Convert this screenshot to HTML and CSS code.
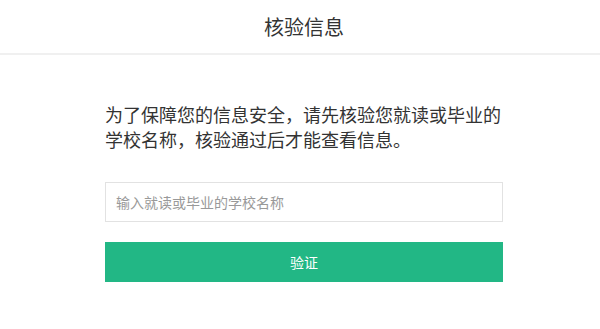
FILE: index.html
```html
<!DOCTYPE html>
<html lang="zh-CN">
<head>
  <meta charset="UTF-8">
  <meta name="viewport" content="width=device-width, initial-scale=1.0">
  <title>核验信息</title>
  <link rel="stylesheet" href="styles.css">
</head>
<body>

  <!-- Header -->
  <div class="header">
    <h1>核验信息</h1>
  </div>

  <!-- Verify Form -->
  <div class="main">
    <p class="tip">为了保障您的信息安全，请先核验您就读或毕业的学校名称，核验通过后才能查看信息。</p>

    <form class="verify-form">
      <input type="text" class="school-input" placeholder="输入就读或毕业的学校名称">
      <button type="button" class="verify-btn">验证</button>
    </form>
  </div>

</body>
</html>
```

FILE: styles.css
```css
* { margin: 0; padding: 0; box-sizing: border-box; font-family: "Microsoft YaHei", "Noto Sans CJK SC", sans-serif; }
body { background: #fff; color: #333; }

/* Header */
.header {
  height: 55px;
  padding-left: 8px;
  border-bottom: 2px solid #f0f0f0;
  display: flex;
  align-items: center;
  justify-content: center;
}
.header h1 { font-size: 20px; font-weight: normal; color: #333; line-height: 1; }

/* Main */
.main { padding: 47px 97px 0 105px; }
.tip { font-size: 18px; line-height: 25px; color: #333; }

.verify-form { display: flex; flex-direction: column; gap: 20px; margin-top: 30px; }

.school-input {
  width: 100%;
  height: 40px;
  padding: 0 10px;
  border: 1px solid #e2e2e2;
  font-size: 14px;
  color: #333;
  outline: none;
}
.school-input::placeholder { color: #999; }

.verify-btn {
  width: 100%;
  height: 40px;
  background: #22b785;
  color: #fff;
  border: none;
  font-size: 14px;
  cursor: pointer;
}
```
